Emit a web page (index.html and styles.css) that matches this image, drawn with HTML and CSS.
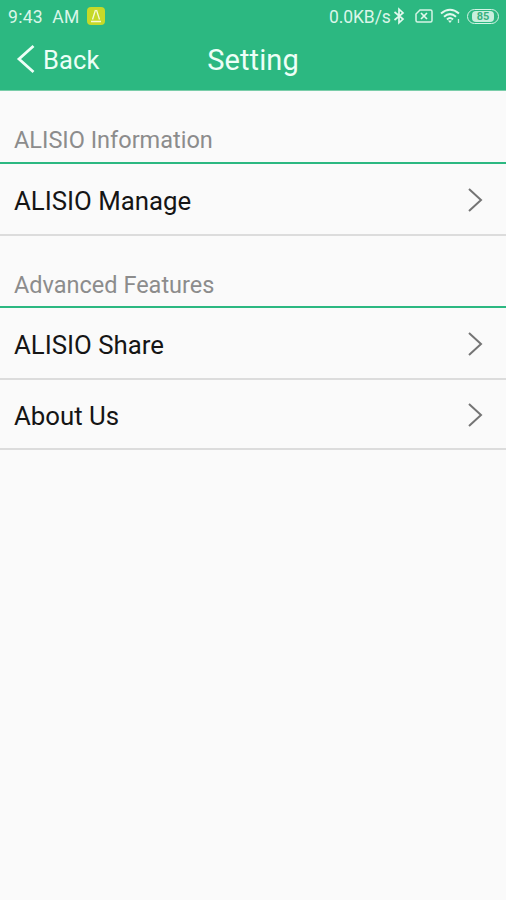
FILE: index.html
```html
<!DOCTYPE html>
<html lang="en">
<head>
<meta charset="utf-8">
<title>Setting</title>
<link rel="stylesheet" href="styles.css">
</head>
<body>
<header class="header">
  <div class="status">
    <span class="time">9:43&nbsp; AM</span>
    <svg class="app" width="18" height="18" viewBox="0 0 18 18"><rect width="18" height="18" rx="4" fill="#c6d928"/><path d="M8.500 3L5.500 12.500M9.500 3l3 9.500M4 14.500h10" fill="none" stroke="#f6fad5" stroke-width="1.300"/></svg>
    <span class="speed">0.0KB/s</span>
    <svg class="bluetooth" width="12" height="18" viewBox="0 0 12 18"><path d="M1.500 5l8.500 7-4 3.800V2.200L10 6l-8.500 7" fill="none" stroke="#e2f8ed" stroke-width="1.700"/></svg>
    <svg class="sim" width="18" height="14" viewBox="0 0 18 14"><path d="M5 1h10.500Q17 1 17 2.500v9Q17 13 15.500 13h-13Q1 13 1 11.500V5z" fill="none" stroke="#d5f4e5" stroke-width="1.500"/><path d="M6 4l6 6m0-6l-6 6" stroke="#e2f8ed" stroke-width="1.700"/></svg>
    <svg class="wifi" width="21" height="16" viewBox="0 0 21 16"><path d="M1 5.500Q10 -2 19 5.500M4 8.700Q10 3.500 16 8.700M7 11.500Q10 8.500 13 11.500" fill="none" stroke="#e2f8ed" stroke-width="2"/><path d="M8 12.500h4l-2 2.500z" fill="#e2f8ed"/><path d="M18.500 11v4" stroke="#c1edda" stroke-width="1.300"/></svg>
    <div class="battery"><span>85</span></div>
  </div>
  <nav class="nav">
    <div class="back">
      <svg width="20" height="30" viewBox="0 0 20 30"><path d="M18.500 2L4 15l14.500 13" fill="none" stroke="#edfff7" stroke-width="2.800"/></svg>
      <span>Back</span>
    </div>
    <h1 class="title">Setting</h1>
  </nav>
</header>
<main>
  <h2 class="section">ALISIO Information</h2>
  <div class="row"><span>ALISIO Manage</span><svg class="chevron" width="18" height="26" viewBox="0 0 18 26"><path d="M3 2l12 11L3 24"/></svg></div>
  <h2 class="section features">Advanced Features</h2>
  <div class="row"><span>ALISIO Share</span><svg class="chevron" width="18" height="26" viewBox="0 0 18 26"><path d="M3 2l12 11L3 24"/></svg></div>
  <div class="row last"><span>About Us</span><svg class="chevron" width="18" height="26" viewBox="0 0 18 26"><path d="M3 2l12 11L3 24"/></svg></div>
</main>
</body>
</html>
```
FILE: styles.css
```css
* { box-sizing: border-box; }
body {
  margin: 0;
  height: 900px;
  overflow: hidden;
  background: #fafafa;
  color: #151515;
  font-family: Roboto, "Liberation Sans", sans-serif;
}
svg { display: block; flex: none; }
.header {
  height: 91px;
  background: #2cb881;
  border-bottom: 1px solid #79cda9;
  color: #edfff7;
}
.status {
  display: flex;
  align-items: center;
  height: 32px;
  padding: 0 7px 0 8px;
  font-size: 17.5px;
  color: #daf6e9;
  white-space: nowrap;
}
.time { width: 79px; padding-top: 2px; letter-spacing: 0.3px; }
.speed { margin-left: auto; width: 64px; padding-top: 2px; letter-spacing: -0.1px; }
.bluetooth { margin-right: 10px; }
.sim { margin-right: 7px; }
.wifi { margin-right: 6px; }
.battery {
  width: 32px;
  height: 15px;
  padding: 1px 4px;
  border: 1.5px solid #d5f4e5;
  border-radius: 8px;
}
.battery span {
  display: block;
  height: 11px;
  border-radius: 4px;
  background: #c9efde;
  color: #3aaf80;
  font-size: 11px;
  font-weight: 700;
  line-height: 11px;
  text-align: center;
}
.nav {
  display: grid;
  grid-template-columns: 1fr auto 1fr;
  align-items: center;
  height: 56px;
  padding: 0 15px;
}
.back { display: flex; align-items: center; gap: 8px; height: 54px; padding-bottom: 2px; font-size: 25.5px; letter-spacing: 0.1px; }
.back span { padding-top: 2px; }
.title { margin: 0; font-size: 29px; font-weight: 400; letter-spacing: 0.1px; }
.section {
  height: 73px;
  margin: 0;
  padding: 33px 14px 0;
  border-bottom: 2px solid #2cb881;
  color: #8c8c8c;
  font-size: 23.5px;
  font-weight: 400;
  line-height: 32px;
}
.features { height: 72px; }
.row {
  display: flex;
  align-items: center;
  justify-content: space-between;
  height: 72px;
  padding: 2px 22px 0 14px;
  border-bottom: 2px solid #dcdcdc;
  font-size: 25.8px;
}
.row span { padding-top: 1px; }
.last { height: 70px; }
.chevron path { fill: none; stroke: #747474; stroke-width: 2; }
```
